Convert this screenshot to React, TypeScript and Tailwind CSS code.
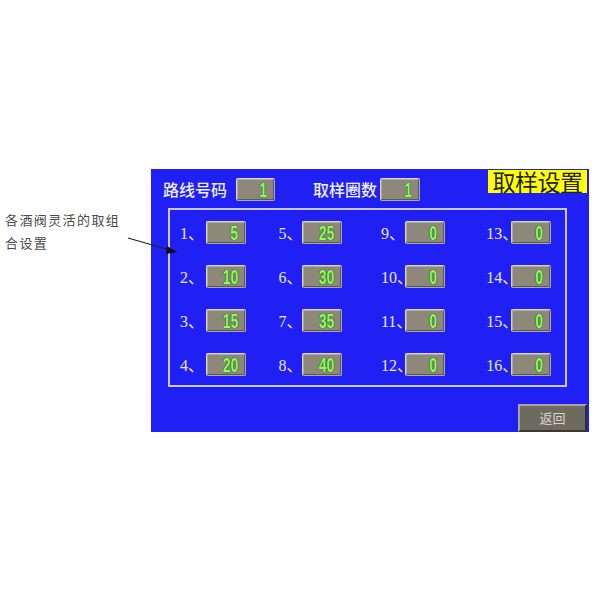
import React from "react";

const cols = [
  { start: 10, width: 100, label: 26, items: [[1, 5], [2, 10], [3, 15], [4, 20]] },
  { start: 0, width: 104, label: 24, items: [[5, 25], [6, 30], [7, 35], [8, 40]] },
  { start: 0, width: 107, label: 24, items: [[9, 0], [10, 0], [11, 0], [12, 0]] },
  { start: 0, width: 80, label: 25, items: [[13, 0], [14, 0], [15, 0], [16, 0]] },
];

function ValBox({ v, w = 40 }: { v: number; w?: number }) {
  return (
    <div
      className="shrink-0 h-[23px] rounded-[2px] border border-t-[#d8d8d0] border-l-[#d8d8d0] border-r-[#a8a8a0] border-b-[#a8a8a0] bg-[#8e887a] shadow-[inset_-1px_-1px_0_#5c5a50,inset_1px_1px_0_#b0aa9c] flex items-center justify-end pr-[7px] overflow-hidden"
      style={{ width: w }}
    >
      <span className="inline-block origin-right scale-x-[0.7] text-[20px] font-bold leading-none text-[#8cff5c] [font-family:'Liberation_Sans',sans-serif] [text-shadow:0_0_1px_#1d4a10,0_0_1px_#1d4a10]">
        {v}
      </span>
    </div>
  );
}

export default function App() {
  return (
    <div className="relative w-[600px] h-[600px] bg-white overflow-hidden">
      <div className="flex pt-[169px]">
        <div className="w-[151px] pl-[5px] pt-[39px] text-[13px] leading-[23px] tracking-[1.4px] text-[#4a4a4a] [font-family:'Noto_Sans_CJK_SC',sans-serif]">
          <div>各酒阀灵活的取组</div>
          <div>合设置</div>
        </div>
        <div className="w-[438px] h-[263px] bg-[#2020f4] flex flex-col">
          <div className="relative h-[39px] flex items-start">
            <div className="flex items-center mt-[9px] pl-[12px] text-[16px] font-medium text-[#eeeeff] [font-family:'Noto_Sans_CJK_SC',sans-serif]">
              <span className="w-[73px] leading-[23px]">路线号码</span>
              <ValBox v={1} w={39} />
              <span className="ml-[38px] w-[67px] leading-[23px]">取样圈数</span>
              <ValBox v={1} w={40} />
            </div>
            <div className="ml-auto mt-[1px] mr-[2px] w-[99px] h-[23px] bg-[#ffff00] text-[#222] text-[23px] leading-[23px] text-center tracking-[-0.5px] [font-family:'Noto_Sans_CJK_SC',sans-serif]">
              取样设置
            </div>
          </div>
          <div className="ml-[17px] w-[399px] border-2 border-[#c8c8f8] pt-[11px] pb-[9px] flex">
            {cols.map((c, ci) => (
              <div
                key={ci}
                className="flex flex-col gap-[21px]"
                style={{ width: c.width, marginLeft: c.start }}
              >
                {c.items.map(([n, v]) => (
                  <div key={n} className="flex items-center h-[23px]">
                    <span
                      className="shrink-0 whitespace-nowrap text-[16px] text-[#e8e8ff] [font-family:'Liberation_Serif','Noto_Sans_CJK_SC',serif]"
                      style={{ width: c.label }}
                    >
                      {n}
                      <span className="[font-family:'Noto_Sans_CJK_SC',sans-serif]">、</span>
                    </span>
                    <ValBox v={v} />
                  </div>
                ))}
              </div>
            ))}
          </div>
          <div className="mt-auto flex justify-end pr-[2px]">
            <div className="w-[69px] h-[28px] bg-[#6e6a5e] border-2 border-t-[#a8a69c] border-l-[#a8a69c] border-r-[#2e2c26] border-b-[#3a3830] flex items-center justify-center text-[13px] text-[#d8d6cc] [font-family:'Noto_Sans_CJK_SC',sans-serif]">
              返回
            </div>
          </div>
        </div>
      </div>
      <svg className="absolute left-0 top-0" width="600" height="600" viewBox="0 0 600 600">
        <line x1="128" y1="238" x2="170" y2="250" stroke="#222" strokeWidth="1.2" />
        <polygon points="177,252 167,246 166,254" fill="#111" />
      </svg>
    </div>
  );
}
